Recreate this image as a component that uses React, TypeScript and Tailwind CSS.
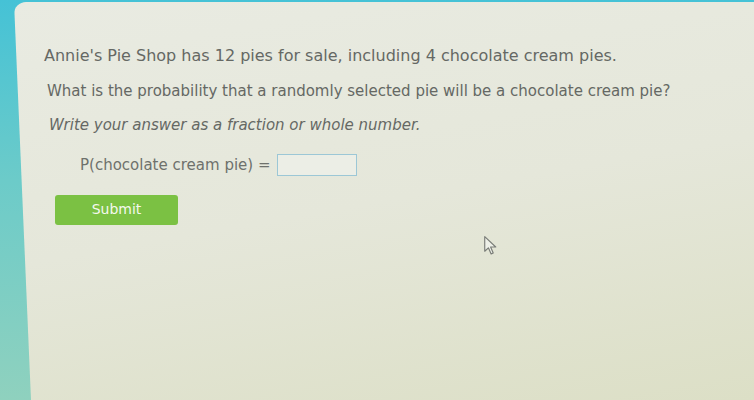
// ─── Question panel ─────────────────────────────

const font = { fontFamily: '"DejaVu Sans", Verdana, sans-serif' };

function Cursor() {
  return (
    <svg width="15" height="21" viewBox="0 0 14 20" className="text-[#7a7d78]">
      <path
        d="M1.5 1.5 L1.5 15.5 L5 12.2 L7.6 18 L9.6 17.1 L7.1 11.4 L12 11.4 Z"
        fill="#eef0e8"
        stroke="currentColor"
        strokeWidth="1.1"
        strokeLinejoin="round"
      />
    </svg>
  );
}

export default function App() {
  return (
    <div className="w-[754px] h-[400px] overflow-hidden flex bg-[linear-gradient(180deg,#45c2d6_0%,#6ccbc9_45%,#8fd1be_100%)]" style={font}>
      <div className="flex-1 ml-[14px] mt-[2px] rounded-tl-[12px] bg-[linear-gradient(170deg,#e9ebe2_0%,#e5e7da_50%,#dcdfc6_100%)] [clip-path:polygon(0_0,100%_0,100%_100%,17px_100%)] text-[15px] text-[#656864]">
        <div className="pl-[30px] pt-[43px] flex flex-col">
          <p className="leading-[21px] text-[16px]">Annie's Pie Shop has 12 pies for sale, including 4 chocolate cream pies.</p>
          <p className="mt-[15px] pl-[3px] leading-[20px]">What is the probability that a randomly selected pie will be a chocolate cream pie?</p>
          <p className="mt-[14px] pl-[5px] leading-[20px] italic">Write your answer as a fraction or whole number.</p>

          <div className="mt-[19px] pl-[36px] flex items-center gap-[7px]">
            <span className="leading-[20px] text-[#6e716c]">P(chocolate cream pie) =</span>
            <div className="w-[80px] h-[22px] border border-[#9cc7d6] bg-[#eceee6]" />
          </div>

          <div className="mt-[19px] pl-[11px] flex items-start">
            <button className="w-[123px] h-[30px] rounded-[3px] bg-[#7bc143] text-[#f4f8ee] text-[14px] pb-[2px]">
              Submit
            </button>
            <div className="ml-[305px] mt-[40px]">
              <Cursor />
            </div>
          </div>
        </div>
      </div>
    </div>
  );
}
